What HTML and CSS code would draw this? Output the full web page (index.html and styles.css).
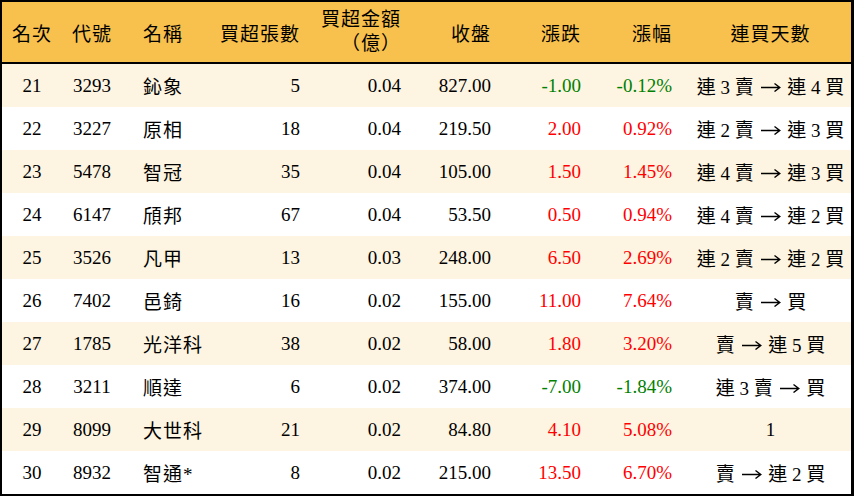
FILE: index.html
```html
<!DOCTYPE html>
<html lang="zh-Hant">
<head>
<meta charset="utf-8">
<title>買超排行</title>
<link rel="stylesheet" href="styles.css">
</head>
<body>
<div class="board">
  <div class="row head">
    <div class="c c1">名次</div>
    <div class="c c2">代號</div>
    <div class="c c3">名稱</div>
    <div class="c c4">買超張數</div>
    <div class="c c5 two">買超金額<br>（億）</div>
    <div class="c c6">收盤</div>
    <div class="c c7">漲跌</div>
    <div class="c c8">漲幅</div>
    <div class="c c9">連買天數</div>
  </div>
  <div class="row odd">
    <div class="c c1">21</div><div class="c c2">3293</div><div class="c c3">鈊象</div><div class="c c4">5</div><div class="c c5">0.04</div><div class="c c6">827.00</div><div class="c c7 dn">-1.00</div><div class="c c8 dn">-0.12%</div><div class="c c9">連 3 賣 <svg class="ar" viewBox="0 0 20 10" aria-label="→"><path d="M0 5.5H18.5M13.5 1.5L18.8 5.5L13.5 9.5"/></svg> 連 4 買</div>
  </div>
  <div class="row">
    <div class="c c1">22</div><div class="c c2">3227</div><div class="c c3">原相</div><div class="c c4">18</div><div class="c c5">0.04</div><div class="c c6">219.50</div><div class="c c7 up">2.00</div><div class="c c8 up">0.92%</div><div class="c c9">連 2 賣 <svg class="ar" viewBox="0 0 20 10" aria-label="→"><path d="M0 5.5H18.5M13.5 1.5L18.8 5.5L13.5 9.5"/></svg> 連 3 買</div>
  </div>
  <div class="row odd">
    <div class="c c1">23</div><div class="c c2">5478</div><div class="c c3">智冠</div><div class="c c4">35</div><div class="c c5">0.04</div><div class="c c6">105.00</div><div class="c c7 up">1.50</div><div class="c c8 up">1.45%</div><div class="c c9">連 4 賣 <svg class="ar" viewBox="0 0 20 10" aria-label="→"><path d="M0 5.5H18.5M13.5 1.5L18.8 5.5L13.5 9.5"/></svg> 連 3 買</div>
  </div>
  <div class="row">
    <div class="c c1">24</div><div class="c c2">6147</div><div class="c c3">頎邦</div><div class="c c4">67</div><div class="c c5">0.04</div><div class="c c6">53.50</div><div class="c c7 up">0.50</div><div class="c c8 up">0.94%</div><div class="c c9">連 4 賣 <svg class="ar" viewBox="0 0 20 10" aria-label="→"><path d="M0 5.5H18.5M13.5 1.5L18.8 5.5L13.5 9.5"/></svg> 連 2 買</div>
  </div>
  <div class="row odd">
    <div class="c c1">25</div><div class="c c2">3526</div><div class="c c3">凡甲</div><div class="c c4">13</div><div class="c c5">0.03</div><div class="c c6">248.00</div><div class="c c7 up">6.50</div><div class="c c8 up">2.69%</div><div class="c c9">連 2 賣 <svg class="ar" viewBox="0 0 20 10" aria-label="→"><path d="M0 5.5H18.5M13.5 1.5L18.8 5.5L13.5 9.5"/></svg> 連 2 買</div>
  </div>
  <div class="row">
    <div class="c c1">26</div><div class="c c2">7402</div><div class="c c3">邑錡</div><div class="c c4">16</div><div class="c c5">0.02</div><div class="c c6">155.00</div><div class="c c7 up">11.00</div><div class="c c8 up">7.64%</div><div class="c c9">賣 <svg class="ar" viewBox="0 0 20 10" aria-label="→"><path d="M0 5.5H18.5M13.5 1.5L18.8 5.5L13.5 9.5"/></svg> 買</div>
  </div>
  <div class="row odd">
    <div class="c c1">27</div><div class="c c2">1785</div><div class="c c3">光洋科</div><div class="c c4">38</div><div class="c c5">0.02</div><div class="c c6">58.00</div><div class="c c7 up">1.80</div><div class="c c8 up">3.20%</div><div class="c c9">賣 <svg class="ar" viewBox="0 0 20 10" aria-label="→"><path d="M0 5.5H18.5M13.5 1.5L18.8 5.5L13.5 9.5"/></svg> 連 5 買</div>
  </div>
  <div class="row">
    <div class="c c1">28</div><div class="c c2">3211</div><div class="c c3">順達</div><div class="c c4">6</div><div class="c c5">0.02</div><div class="c c6">374.00</div><div class="c c7 dn">-7.00</div><div class="c c8 dn">-1.84%</div><div class="c c9">連 3 賣 <svg class="ar" viewBox="0 0 20 10" aria-label="→"><path d="M0 5.5H18.5M13.5 1.5L18.8 5.5L13.5 9.5"/></svg> 買</div>
  </div>
  <div class="row odd">
    <div class="c c1">29</div><div class="c c2">8099</div><div class="c c3">大世科</div><div class="c c4">21</div><div class="c c5">0.02</div><div class="c c6">84.80</div><div class="c c7 up">4.10</div><div class="c c8 up">5.08%</div><div class="c c9">1</div>
  </div>
  <div class="row">
    <div class="c c1">30</div><div class="c c2">8932</div><div class="c c3">智通*</div><div class="c c4">8</div><div class="c c5">0.02</div><div class="c c6">215.00</div><div class="c c7 up">13.50</div><div class="c c8 up">6.70%</div><div class="c c9">賣 <svg class="ar" viewBox="0 0 20 10" aria-label="→"><path d="M0 5.5H18.5M13.5 1.5L18.8 5.5L13.5 9.5"/></svg> 連 2 買</div>
  </div>
</div>
</body>
</html>
```

FILE: styles.css
```css
html, body {
  margin: 0;
  padding: 0;
  background: #ffffff;
}

.board {
  width: 854px;
  height: 496px;
  box-sizing: border-box;
  border-style: solid;
  border-color: #000000;
  border-width: 2px 3px 2px 2px;
  background: #ffffff;
  font-family: "Liberation Serif", "Noto Sans CJK TC", serif;
  font-size: 19px;
  color: #000000;
  display: flex;
  flex-direction: column;
}

.row {
  display: grid;
  grid-template-columns: 60px 60px 98px 90px 101px 90px 90px 91px 169px;
  height: 43px;
  align-items: center;
}

.row.head {
  height: 60px;
  background: #f8c04c;
  border-bottom: 2px solid #000000;
}

.row.odd {
  background: #fdf4e1;
}

.c {
  white-space: nowrap;
  text-align: right;
  padding-right: 10px;
}

.head .c {
  letter-spacing: 1px;
}

.c1, .c2 {
  text-align: center;
  padding-right: 0;
}

.c3 {
  text-align: left;
  padding-left: 21px;
  padding-right: 0;
  letter-spacing: 1px;
}

.c9 {
  text-align: center;
  padding-left: 8px;
  padding-right: 0;
}

.ar {
  width: 20px;
  height: 10px;
  vertical-align: 2px;
  margin: 0 2px;
  fill: none;
  stroke: #000000;
  stroke-width: 1.4;
}

.two {
  line-height: 24px;
}

.up {
  color: #ff0000;
}

.dn {
  color: #008000;
}
```
